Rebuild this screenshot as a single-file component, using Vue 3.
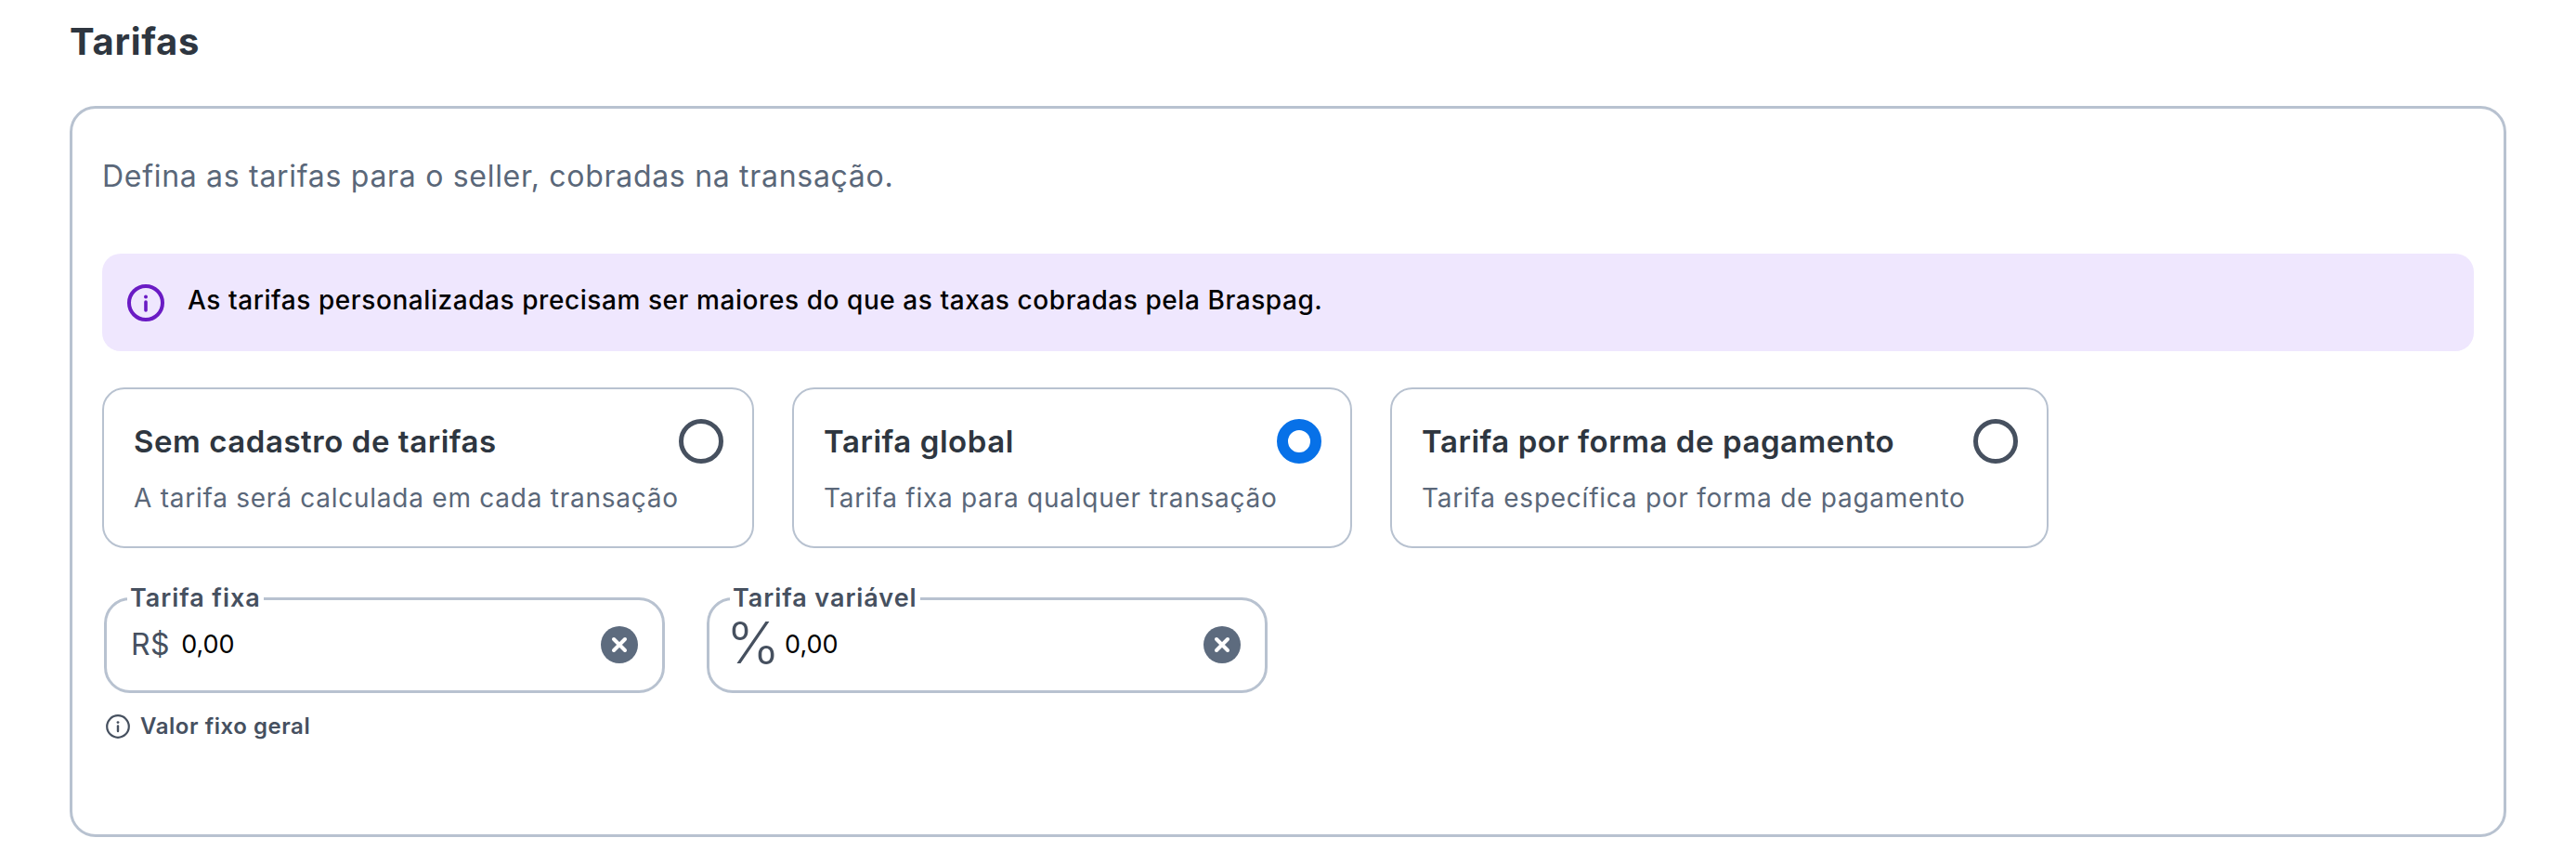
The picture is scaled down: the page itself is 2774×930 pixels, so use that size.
<script setup>
import { ref } from 'vue'

const selected = ref('global')
const options = [
  { id: 'none', title: 'Sem cadastro de tarifas', text: 'A tarifa será calculada em cada transação', width: 702 },
  { id: 'global', title: 'Tarifa global', text: 'Tarifa fixa para qualquer transação', width: 603 },
  { id: 'method', title: 'Tarifa por forma de pagamento', text: 'Tarifa específica por forma de pagamento', width: 709 }
]
const fixed = ref('0,00')
const variable = ref('0,00')
</script>

<template>
  <div class="page">
    <h2 class="heading">Tarifas</h2>
    <section class="panel">
      <p class="intro">Defina as tarifas para o seller, cobradas na transação.</p>

      <div class="alert">
        <svg class="alert-icon" viewBox="0 0 40 40" fill="none">
          <circle cx="20" cy="20" r="18" stroke="#6a1bc4" stroke-width="4" />
          <circle cx="20" cy="13.5" r="2" fill="#6a1bc4" />
          <path d="M20 19v9" stroke="#6a1bc4" stroke-width="3.6" stroke-linecap="round" />
        </svg>
        <span>As tarifas personalizadas precisam ser maiores do que as taxas cobradas pela Braspag.</span>
      </div>

      <div class="options">
        <div
          v-for="opt in options"
          :key="opt.id"
          class="option"
          :style="{ width: opt.width + 'px' }"
          @click="selected = opt.id"
        >
          <div class="option-head">
            <span class="option-title">{{ opt.title }}</span>
            <span class="radio" :class="{ on: selected === opt.id }"></span>
          </div>
          <div class="option-text">{{ opt.text }}</div>
        </div>
      </div>

      <div class="fields">
        <div class="field-col">
          <fieldset class="field">
            <legend>Tarifa fixa</legend>
            <div class="field-row">
              <span class="prefix">R$</span>
              <input v-model="fixed" class="value" />
              <svg class="clear" viewBox="0 0 40 40">
                <circle cx="20" cy="20" r="20" fill="#5d6b7e" />
                <path d="M14 14l12 12M26 14L14 26" stroke="#fff" stroke-width="4" stroke-linecap="round" />
              </svg>
            </div>
          </fieldset>
          <div class="hint">
            <svg class="hint-icon" viewBox="0 0 26 26" fill="none">
              <circle cx="13" cy="13" r="11.8" stroke="#46505f" stroke-width="2.2" />
              <circle cx="13" cy="8.6" r="1.4" fill="#46505f" />
              <path d="M13 12.4v5.6" stroke="#46505f" stroke-width="2.4" stroke-linecap="round" />
            </svg>
            <span>Valor fixo geral</span>
          </div>
        </div>
        <fieldset class="field">
          <legend>Tarifa variável</legend>
          <div class="field-row">
            <span class="prefix percent">%</span>
            <input v-model="variable" class="value tight" />
            <svg class="clear" viewBox="0 0 40 40">
              <circle cx="20" cy="20" r="20" fill="#5d6b7e" />
              <path d="M14 14l12 12M26 14L14 26" stroke="#fff" stroke-width="4" stroke-linecap="round" />
            </svg>
          </div>
        </fieldset>
      </div>
    </section>
  </div>
</template>

<style>
body { background: #fff; }
</style>

<style scoped>
.page {
  box-sizing: border-box; width: 2774px; height: 930px;
  padding: 22px 75px 0; font-family: Inter, "Liberation Sans", sans-serif;
}
.heading {
  margin: 0 0 47px; font-size: 40px; line-height: 45px; font-weight: 700; color: #2e3640;
  letter-spacing: .7px;
}
.panel {
  box-sizing: border-box; height: 787px; padding: 53px 32px 0;
  border: 3px solid #b8c2d0; border-radius: 28px;
}
.intro { margin: 0 0 63px; font-size: 32px; line-height: 40px; color: #5a6779; letter-spacing: .7px; }
.alert {
  display: flex; align-items: center; gap: 25px; height: 105px; padding: 0 27px;
  box-sizing: border-box; background: #efe7fe; border-radius: 20px;
  font-size: 28px; font-weight: 500; color: #000; letter-spacing: .57px;
}
.alert span { margin-top: -6px; }
.alert-icon { width: 40px; height: 40px; flex: none; }
.options { display: flex; gap: 41px; margin-top: 39px; }
.option {
  box-sizing: border-box; height: 173px; padding: 32px 31px 0 32px;
  border: 2px solid #b8c2d0; border-radius: 24px; cursor: pointer;
}
.option-head { display: flex; justify-content: space-between; align-items: center; height: 48px; }
.option-title { font-size: 33px; font-weight: 600; color: #2e3640; letter-spacing: .55px; }
.option-text { margin-top: 17px; font-size: 28px; line-height: 40px; color: #5a6779; letter-spacing: .75px; }
.radio {
  box-sizing: border-box; width: 48px; height: 48px; border: 5px solid #46505f; border-radius: 50%;
}
.radio.on { border: 12px solid #0771e8; }
.fields { display: flex; align-items: flex-start; gap: 45px; margin-top: 41px; margin-left: 2px; }
.field-col { display: flex; flex-direction: column; }
.field {
  box-sizing: border-box; width: 604px; margin: 0; padding: 0 26px 13px 26px; min-inline-size: 0;
  border: 3px solid #b8c2d0; border-radius: 28px;
}
.field legend {
  padding: 0 3px; margin-left: -4px; font-size: 27px; line-height: 26px; font-weight: 600; color: #46505f;
  letter-spacing: .95px;
}
.field-row { display: flex; align-items: center; height: 73px; }
.prefix { font-size: 32px; color: #46505f; letter-spacing: .5px; }
.percent { font-size: 62px; font-weight: 300; line-height: 62px; letter-spacing: 0; margin: -3px 0 0 -8px; }
.value {
  flex: 1; min-width: 0; margin-left: 12px; padding: 0; border: none; outline: none; background: transparent;
  font-family: inherit; font-size: 27px; color: #000;
}
.value.tight { margin-left: 5px; }
.clear { width: 40px; height: 40px; flex: none; }
.hint {
  display: flex; align-items: center; gap: 11px; margin-top: 21px; margin-left: 2px;
  font-size: 24px; font-weight: 600; color: #46505f; letter-spacing: .55px;
}
.hint-icon { width: 26px; height: 26px; flex: none; }
</style>
